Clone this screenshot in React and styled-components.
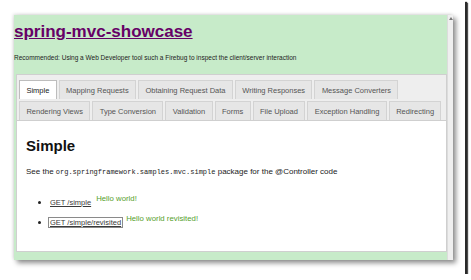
import React from "react";
import styled, { createGlobalStyle } from "styled-components";

const GlobalStyle = createGlobalStyle`
  body {
    margin: 0;
    background: #fff;
    font-family: "Liberation Sans", Arial, sans-serif;
  }
`;

const Picture = styled.div`
  width: 465px;
  height: 274px;
  box-sizing: border-box;
  padding: 15px 0 0 14px;
  background: #fff;
  box-shadow: 2px 2px 1px #2a2a2a, 3px 3px 1px #555;
`;

const Browser = styled.div`
  width: 439px;
  height: 245px;
  display: flex;
  box-shadow: 3px 3px 5px rgba(0, 0, 0, 0.45), -1px -1px 3px rgba(0, 0, 0, 0.12);
`;

const Viewport = styled.div`
  flex: 1;
  min-width: 0;
  display: flex;
  flex-direction: column;
  background: #c7ebc9;
  overflow: hidden;
`;

const Scrollbar = styled.div`
  width: 6px;
  background: #efefef;
  border-left: 1px solid #dcdcdc;
  box-sizing: border-box;
  display: flex;
  justify-content: center;
  padding-top: 2px;
`;

const Header = styled.header`
  height: 59px;
  box-sizing: border-box;
  padding-top: 7px;
`;

const Title = styled.h1`
  margin: 0;
  font-size: 17px;
  line-height: 20px;
  font-weight: bold;

  a {
    color: #660066;
    text-decoration: underline;
  }
`;

const Lead = styled.p`
  margin: 11px 0 0;
  font-size: 6.5px;
  line-height: 10px;
  color: #222;
`;

const Tabs = styled.div`
  flex: 1;
  margin: 0 0 8px 2px;
  border: 1px solid #cfcfcf;
  background: #fff;
  display: flex;
  flex-direction: column;
`;

const Nav = styled.div`
  display: flex;
  flex-direction: column;
  gap: 2px;
  padding: 5px 2px 0;
  background: #eeeeee;
  border-bottom: 1px solid #cfcfcf;
`;

const TabRow = styled.div`
  display: flex;
  gap: 2px;
`;

const Tab = styled.div`
  height: 19px;
  box-sizing: border-box;
  padding: 0 6.4px;
  display: flex;
  align-items: center;
  border: 1px solid ${(p) => (p.$active ? "#bdbdbd" : "#d3d3d3")};
  border-bottom: none;
  background: ${(p) => (p.$active ? "#fff" : "#e6e6e6")};
  color: ${(p) => (p.$active ? "#222" : "#555")};
  font-size: 7.5px;
  white-space: nowrap;
`;

const Panel = styled.div`
  padding: 15px 10px 0 9px;
  color: #222;
`;

const Heading = styled.h2`
  margin: 0;
  font-size: 15px;
  line-height: 20px;
  font-weight: bold;
  color: #111;
`;

const Text = styled.p`
  margin: 10px 0 0;
  font-size: 8px;
  line-height: 12px;

  code {
    font-family: "Liberation Mono", "Courier New", monospace;
    font-size: 7px;
  }
`;

const List = styled.ul`
  margin: 15px 0 0;
  padding-left: 24px;
  display: flex;
  flex-direction: column;
  gap: 4px;
`;

const Item = styled.li`
  font-size: 8px;
  line-height: 12px;

  &::marker {
    font-size: 9px;
  }
`;

const Endpoint = styled.a`
  color: #3a3a3a;
  font-size: 7.5px;
  text-decoration: underline;
  border: 1px solid ${(p) => (p.$focused ? "#8a8a8a" : "transparent")};
  padding: 0 1px;
  margin-left: -2px;
`;

const Result = styled.span`
  color: #56a02c;
  font-size: 7.8px;
  vertical-align: 4px;
  margin-left: 3px;
`;

const rows = [
  ["Simple", "Mapping Requests", "Obtaining Request Data", "Writing Responses", "Message Converters"],
  ["Rendering Views", "Type Conversion", "Validation", "Forms", "File Upload", "Exception Handling", "Redirecting"],
];

export default function App() {
  return (
    <>
      <GlobalStyle />
      <Picture>
        <Browser>
          <Viewport>
            <Header>
              <Title>
                <a href="#">spring-mvc-showcase</a>
              </Title>
              <Lead>
                Recommended: Using a Web Developer tool such a Firebug to inspect the client/server interaction
              </Lead>
            </Header>
            <Tabs>
              <Nav>
                {rows.map((row, i) => (
                  <TabRow key={i}>
                    {row.map((name) => (
                      <Tab key={name} $active={name === "Simple"}>
                        {name}
                      </Tab>
                    ))}
                  </TabRow>
                ))}
              </Nav>
              <Panel>
                <Heading>Simple</Heading>
                <Text>
                  See the <code>org.springframework.samples.mvc.simple</code> package for the @Controller code
                </Text>
                <List>
                  <Item>
                    <Endpoint href="#">GET /simple</Endpoint>
                    <Result>Hello world!</Result>
                  </Item>
                  <Item>
                    <Endpoint href="#" $focused>GET /simple/revisited</Endpoint>
                    <Result>Hello world revisited!</Result>
                  </Item>
                </List>
              </Panel>
            </Tabs>
          </Viewport>
          <Scrollbar>
            <svg width="4" height="3" viewBox="0 0 4 3">
              <path d="M0 3 L2 0 L4 3 Z" fill="#777" />
            </svg>
          </Scrollbar>
        </Browser>
      </Picture>
    </>
  );
}
